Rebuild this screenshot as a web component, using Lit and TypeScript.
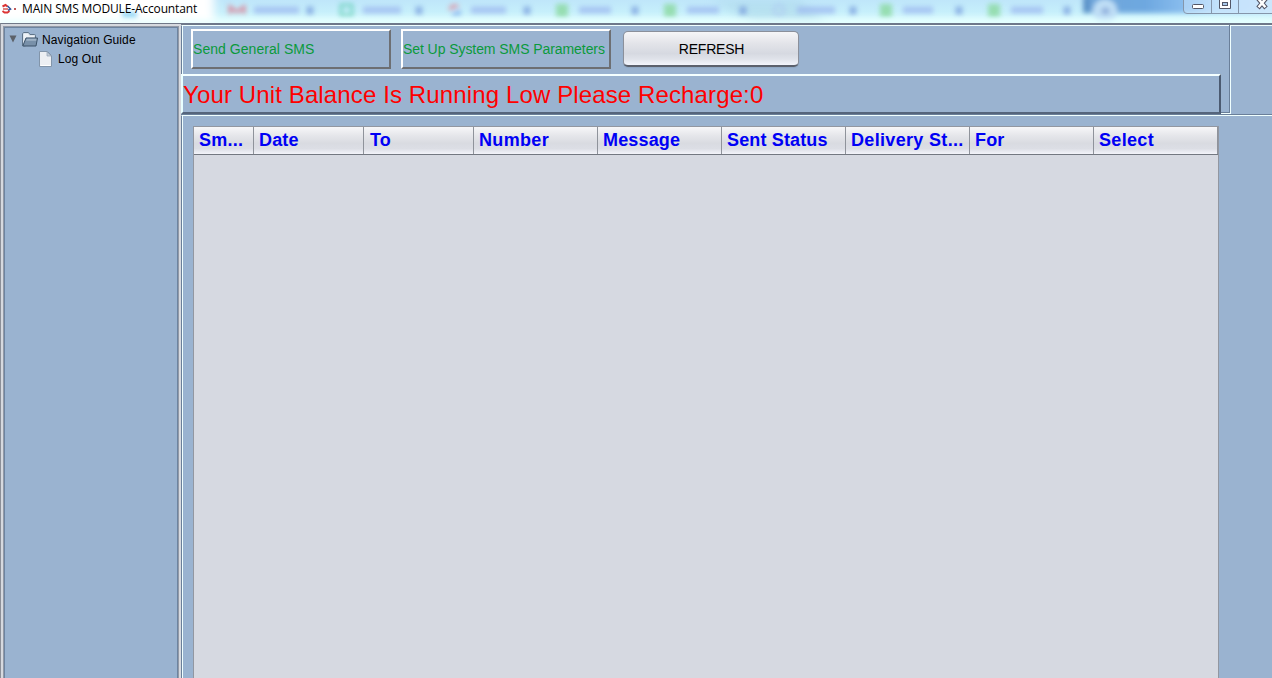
import { LitElement, html, css, svg } from "lit";
import { customElement } from "lit/decorators.js";

const TABS = [
  { x: 230, w: 45, c: "#e06a80", kind: "m" },
  { x: 339, w: 38, c: "#62cdb4", kind: "o" },
  { x: 447, w: 35, c: "#e08aa8", kind: "g" },
  { x: 555, w: 32, c: "#86d89a", kind: "s" },
  { x: 663, w: 32, c: "#86d89a", kind: "s" },
  { x: 773, w: 38, c: "#a9bdf2", kind: "r" },
  { x: 879, w: 30, c: "#86d89a", kind: "s" },
  { x: 987, w: 32, c: "#86d89a", kind: "s" },
];

@customElement("title-bar")
class TitleBar extends LitElement {
  static styles = css`
    :host { display: grid; height: 23px; overflow: hidden; background: #d5f6fc; }
    .layer { grid-area: 1 / 1; }
    .glass { display: block; width: 1272px; height: 23px; }
    .caption { display: flex; align-items: flex-start; justify-content: space-between; }
    .name { display: flex; gap: 6px; }
    .logo { display: block; width: 16px; height: 16px; margin-top: 1px; }
    .text { font: 12px/18px "Open Sans", sans-serif; color: #000; white-space: nowrap; letter-spacing: -0.15px; }
    .controls { display: block; width: 90px; height: 15px; }
  `;
  icon(t: { x: number; c: string; kind: string }) {
    if (t.kind === "m") return svg`<path d="M${t.x} 14V7l7 5 7-5v7" fill="none" stroke=${t.c} stroke-width="3"/>`;
    if (t.kind === "o") return svg`<rect x=${t.x + 2} y="5" width="11" height="10" fill="none" stroke=${t.c} stroke-width="3"/>`;
    if (t.kind === "g") return svg`<path d="M${t.x + 3} 10a5 5 0 0 1 8-3" fill="none" stroke="#e86d80" stroke-width="3"/><path d="M${t.x + 5} 14h7v-4" fill="none" stroke="#6d9bea" stroke-width="3"/>`;
    if (t.kind === "r") return svg`<circle cx=${t.x + 6} cy="10" r="5" fill="none" stroke=${t.c} stroke-width="2"/>`;
    return svg`<rect x=${t.x + 1} y="4" width="12" height="13" fill=${t.c}/>`;
  }
  render() {
    return html`
      <svg class="layer glass" viewBox="0 0 1272 23">
        <defs>
          <linearGradient id="base" x1="0" y1="0" x2="0" y2="1">
            <stop offset="0" stop-color="#bfe6fa"/><stop offset=".5" stop-color="#c6effb"/><stop offset="1" stop-color="#e2fffe"/>
          </linearGradient>
          <linearGradient id="sky" x1="0" y1="0" x2="1" y2="0">
            <stop offset="0" stop-color="#6fa6da"/><stop offset=".3" stop-color="#6ea8e0"/><stop offset=".52" stop-color="#8dc0f0"/><stop offset=".65" stop-color="#b4dafa"/><stop offset="1" stop-color="#cbe6fc"/>
          </linearGradient>
          <filter id="b2" x="-30%" y="-100%" width="160%" height="300%"><feGaussianBlur stdDeviation="2.500"/></filter>
          <filter id="b5" x="-30%" y="-100%" width="160%" height="300%"><feGaussianBlur stdDeviation="5"/></filter>
        </defs>
        <rect width="1272" height="23" fill="url(#base)"/>
        <rect x="-20" y="-12" width="234" height="46" fill="#fff" filter="url(#b5)"/>
        <rect x="122" y="12" width="15" height="6" fill="#8fd6f5" filter="url(#b2)"/>
        <path d="M710 0h88l30 23h-74z" fill="#a9d4e6" opacity=".5" filter="url(#b5)"/>
        <g filter="url(#b2)">
          <path d="M1086-6h200v19h-200z" fill="url(#sky)"/>
          <path d="M1083-4h7v17h-7z" fill="#5b93c8"/>
          <circle cx="1105" cy="11" r="12" fill="#c0dff6"/>
          <path d="M1101 11h9m-4.500-4v8" stroke="#86a6d8" stroke-width="3"/>
        </g>
        <g filter="url(#b2)" opacity=".75">
          ${TABS.map((t) => svg`${this.icon(t)}
            <path d="M${t.x + 24} 10h${t.w}" stroke="#9db8f0" stroke-width="7"/>
            <path d="M${t.x + 77} 7l6 7m0-7l-6 7" stroke="#7598dc" stroke-width="3.500"/>`)}
        </g>
        <rect y="19" width="1272" height="6" fill="#e6ffff" opacity=".75" filter="url(#b2)"/>
      </svg>
      <div class="layer caption">
        <div class="name">
          <svg class="logo" viewBox="0 0 16 16">
            <path d="M2.500 5.500l3-1.500 2 1.500" fill="none" stroke="#d33" stroke-width="2"/>
            <path d="M3 8h5" fill="none" stroke="#c9302c" stroke-width="1.200"/>
            <path d="M7.500 5l3 3-2.500 1.500" fill="none" stroke="#31539c" stroke-width="1.600"/>
            <path d="M2.500 10l2 1.500h3l2-1.500" fill="none" stroke="#d33" stroke-width="1.800"/>
            <path d="M14 8h2" stroke="#a22" stroke-width="1.400"/>
          </svg>
          <span class="text">MAIN SMS MODULE-Accountant</span>
        </div>
        <svg class="controls" viewBox="0 0 90 15">
          <path d="M1.500-1v11q0 3.500 3.500 3.500h86V-1z" fill="#d3e9fc" fill-opacity=".45" stroke="#8596ab"/>
          <path d="M29.500 0v13M56.500 0v13" stroke="#8596ab"/>
          <rect x="10.500" y="4.500" width="11" height="4" rx="1" fill="#fff" stroke="#535666"/>
          <path d="M37.500-1v9.500h11V-1z" fill="#fff" stroke="#535666"/>
          <rect x="40.500" y="2.500" width="5" height="3" fill="#a9c9ea" stroke="#535666"/>
          <path d="M76-1.500l8 9.500m0-9.500l-8 9.500" stroke="#535666" stroke-width="4.500"/>
          <path d="M76.600-1l6.800 8.300m0-8.300l-6.800 8.300" stroke="#fff" stroke-width="2.500"/>
        </svg>
      </div>`;
  }
}

@customElement("nav-tree")
class NavTree extends LitElement {
  static styles = css`
    :host { display: block; box-sizing: border-box; width: 181px; padding: 2px 2px 0; background: #d6d9df; border-top: 1px solid #707888; border-left: 1px solid #8b8f98; }
    .frame { box-sizing: border-box; height: 100%; border: 1px solid #9299a6; border-bottom: 0; }
    .pane { box-sizing: border-box; height: 100%; background: #9ab3d0; border: 1px solid #6d84a0; border-bottom: 0; padding: 2px 0 0 3px; }
    .row { display: flex; align-items: center; height: 19px; font: 12px/19px "Liberation Sans", sans-serif; color: #000; letter-spacing: 0.1px; }
    .row span { padding-top: 1px; }
    .arrow { width: 8px; height: 8px; margin: 0 5px 2px 1px; }
    .folder { width: 16px; height: 16px; margin-right: 4px; }
    .leaf { padding-left: 30px; }
    .file { width: 16px; height: 16px; margin-right: 4px; }
    svg { display: block; flex: none; }
  `;
  render() {
    return html`<div class="frame"><div class="pane">
      <div class="row">
        <svg class="arrow" viewBox="0 0 8 8"><path d="M.5 .500h7L4 7.500z" fill="#5c6169"/></svg>
        <svg class="folder" viewBox="0 0 16 16">
          <path d="M.500 13.500V2L1.500 .500h5l1.500 2h4.500q1 0 1 1V7L3 14z" fill="#cbd7e4" stroke="#5f7489"/>
          <path d="M1.500 1.500h4.500l1.300 2h5v2H4L1.500 11z" fill="#eef2f6"/>
          <path d="M.800 14L4 6H15.500L14 14z" fill="#7890a9" stroke="#3c5268"/>
          <path d="M4.800 6.800h9.700l-.4 2H4z" fill="#9fb3c7"/>
        </svg>
        <span>Navigation Guide</span>
      </div>
      <div class="row leaf">
        <svg class="file" viewBox="0 0 16 16">
          <path d="M1.500 .500h8l4 4V15.500h-12z" fill="#eceff3" stroke="#8295aa"/>
          <path d="M9 1v4h4z" fill="#c3ced9" stroke="#8fa1b5" stroke-width=".7"/>
          <path d="M2.500 14.500h10" stroke="#fff"/>
        </svg>
        <span>Log Out</span>
      </div>
    </div></div>`;
  }
}

@customElement("sms-table")
class SmsTable extends LitElement {
  static styles = css`
    :host { display: block; box-sizing: border-box; width: 1026px; height: 100%; background: #d6d9e1; border: 1px solid #9297a1; border-bottom: 0; }
    .head { display: flex; box-sizing: border-box; height: 28px; border-bottom: 1px solid #737881; background: linear-gradient(#f7f7f9 0, #e6e7eb 30%, #d9dbe1 60%, #dcdee5 80%, #f3f4fa 100%); }
    .cell { box-sizing: border-box; flex: none; padding-left: 5px; border-right: 1px solid #8f939b; font: bold 18px/26px "Liberation Sans", sans-serif; letter-spacing: 0.15px; color: #0000f5; white-space: nowrap; overflow: hidden; }
    .w60 { width: 60px; letter-spacing: 0.25px; }
    .w110 { width: 110px; }
    .w124 { width: 124px; }
    .pad6 { padding-left: 6px; }
    .wide { letter-spacing: 0.33px; }
  `;
  render() {
    const cols: [string, string][] = [
      ["Sm...", "w60"], ["Date", "w110"], ["To", "w110 pad6"], ["Number", "w124 wide"], ["Message", "w124"],
      ["Sent Status", "w124"], ["Delivery St...", "w124 wide"], ["For", "w124"], ["Select", "w124 wide"],
    ];
    return html`<div class="head">${cols.map(([t, w]) => html`<div class="cell ${w}">${t}</div>`)}</div>`;
  }
}

@customElement("app-root")
class AppRoot extends LitElement {
  static styles = css`
    :host { display: flex; flex-direction: column; width: 1272px; height: 678px; overflow: hidden; background: #9ab3d0; font-family: "Liberation Sans", sans-serif; }
    .body { display: flex; flex: 1; min-height: 0; }
    .main { flex: 1; min-width: 0; display: flex; flex-direction: column; background: #9ab3d0; }
    .top { display: flex; height: 92px; box-sizing: border-box; border-top: 2px solid #6e788a; border-bottom: 1px solid #6a7f99; }
    .panel { box-sizing: border-box; width: 1050px; border-right: 1px solid #f0ffff; border-bottom: 1px solid #f0ffff; display: flex; flex-direction: column; background: linear-gradient(#6a7f99, #6a7f99) right top / 1px 100% no-repeat, linear-gradient(#6a7f99, #6a7f99) left bottom / 100% 1px no-repeat; }
    .rest { flex: 1; border-top: 1px solid #f0ffff; }
    .tools { display: flex; flex: none; height: 49px; box-sizing: border-box; margin-right: 1px; border-top: 1px solid #f0ffff; border-left: 1px solid #6a7f99; padding: 3px 0 0 9px; box-shadow: inset 1px 0 #f0ffff; }
    .link { box-sizing: border-box; height: 40px; border: 2px solid; border-color: #fff #6d6f73 #6d6f73 #fff; font-size: 14px; line-height: 37px; color: #0a9a3c; white-space: nowrap; }
    .general { width: 200px; margin-right: 10px; letter-spacing: 0.05px; }
    .setup { width: 210px; margin-right: 12px; letter-spacing: -0.07px; }
    .refresh { box-sizing: border-box; width: 176px; height: 36px; margin-top: 2px; border: 1px solid #8b909b; border-bottom: 2px solid #5b616d; border-radius: 5px; background: linear-gradient(#f6f6f8, #e3e4e9 35%, #d6d9e1 65%, #e0e3ea 82%, #f3f5fc); font: 14px/33px "Liberation Sans", sans-serif; letter-spacing: -0.2px; color: #000; padding: 1px 0 0 1px; box-shadow: 0 1px 1px #8fa7c2; }
    .alert { box-sizing: border-box; flex: none; height: 40px; margin-bottom: -1px; width: 1040px; border: 2px solid; border-color: #f4ffff #4b5a70 #55657c #e8ffff; font-size: 24px; line-height: 38px; letter-spacing: 0.125px; color: #f00; white-space: nowrap; }
    .content { flex: 1; min-height: 0; box-sizing: border-box; border-top: 1px solid #f0ffff; border-left: 1px solid #6a7f99; box-shadow: inset 1px 0 #f0ffff; padding: 10px 0 0 11px; }
  `;
  render() {
    return html`
      <title-bar></title-bar>
      <div class="body">
        <nav-tree></nav-tree>
        <div class="main">
          <div class="top">
            <div class="panel">
              <div class="tools">
                <div class="link general">Send General SMS</div>
                <div class="link setup">Set Up System SMS Parameters</div>
                <button class="refresh">REFRESH</button>
              </div>
              <div class="alert">Your Unit Balance Is Running Low Please Recharge:0</div>
            </div>
            <div class="rest"></div>
          </div>
          <div class="content"><sms-table></sms-table></div>
        </div>
      </div>`;
  }
}
